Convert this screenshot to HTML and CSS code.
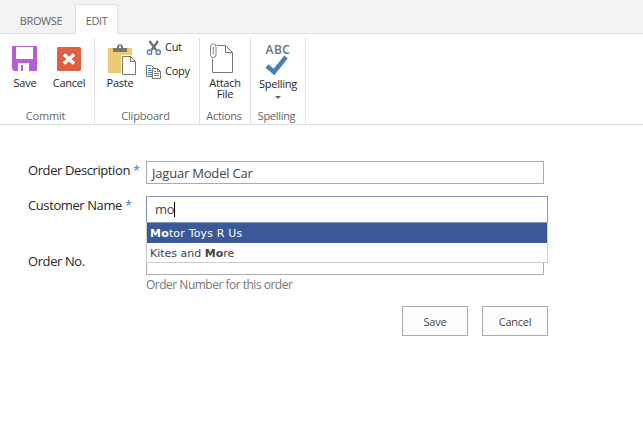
FILE: index.html
```
<!DOCTYPE html>
<html lang="en">
<head>
<meta charset="utf-8">
<title>Edit Order</title>
<link rel="stylesheet" href="styles.css">
</head>
<body>
<nav class="tabs">
  <div class="tab browse"><span>BROWSE</span></div>
  <div class="tab active"><span>EDIT</span></div>
</nav>
<section class="ribbon">
  <div class="group commit">
    <div class="tools">
      <div class="tool save">
        <svg class="icon" width="32" height="32" viewBox="0 0 32 32"><path fill="#b55fd0" fill-rule="evenodd" d="M4 4h25v25H6l-2-2zM8 5v12h17V5zM10 21v8h3v-6h2v6h6v-8z"/></svg>
        <span>Save</span>
      </div>
      <div class="tool cancel">
        <svg class="icon" width="32" height="32" viewBox="0 0 32 32"><rect x="4" y="5" width="24" height="24" rx="1.5" fill="#dd6142"/><path d="M11 12.500l10 9M21 12.500l-10 9" stroke="#fff" stroke-width="3.5"/></svg>
        <span>Cancel</span>
      </div>
    </div>
    <div class="caption">Commit</div>
  </div>
  <div class="group clipboard">
    <div class="tools">
      <div class="tool paste">
        <svg class="icon" width="32" height="32" viewBox="0 0 32 32"><rect x="4" y="6" width="24" height="25" rx="1" fill="#edcb75"/><path d="M9 10V6h4V4l1.500-1.500h3L19 4v2h4v4z" fill="#77786b"/><rect x="15" y="4" width="2" height="2" fill="#fff"/><path d="M17 13h10l5 5v15H17z" fill="#fff"/><path d="M18.500 14.500h8l5 5v13h-13z" fill="#fff" stroke="#77786b"/><path d="M26.500 14.500v5h5" fill="none" stroke="#77786b"/></svg>
        <span>Paste</span>
      </div>
      <div class="small-tools">
        <div class="small-tool">
          <svg width="16" height="16" viewBox="0 0 16 16"><path d="M3.500 1l6.500 9M12 1L5.500 10" stroke="#6b6b6b" stroke-width="2.200" fill="none"/><circle cx="3.500" cy="12.200" r="2.200" fill="#fff" stroke="#4a7ebb" stroke-width="1.300"/><circle cx="12.200" cy="12.200" r="2.200" fill="#fff" stroke="#4a7ebb" stroke-width="1.300"/></svg>
          <span>Cut</span>
        </div>
        <div class="small-tool">
          <svg width="16" height="16" viewBox="0 0 16 16"><path d="M.5 1.500h5l3 3v8h-8z" fill="#fff" stroke="#77786b"/><path d="M2 4.500h3M2 6.500h4M2 8.500h4M2 10.500h4" stroke="#4a7ebb"/><path d="M6.500 4.500h5l3 3v7h-8z" fill="#fff" stroke="#77786b"/><path d="M11.500 4.500v3h3" fill="none" stroke="#77786b"/><path d="M8 7.500h2M8 9.500h5M8 11.500h5" stroke="#4a7ebb"/></svg>
          <span>Copy</span>
        </div>
      </div>
    </div>
    <div class="caption">Clipboard</div>
  </div>
  <div class="group actions">
    <div class="tools">
      <div class="tool attach">
        <svg class="icon" width="32" height="32" viewBox="0 0 32 32"><path d="M5.500 17v13.500h20v-20l-7-7H10" fill="#fff" stroke="#77786b"/><path d="M18.500 3.500v7h7" fill="none" stroke="#77786b"/><path d="M3.500 5v7.500a2.500 3 0 0 0 5.500 0v-8a2.500 2.500 0 0 0-5.500 0v1M6.300 5v7.500" fill="none" stroke="#85857b"/></svg>
        <span>Attach<br>File</span>
      </div>
    </div>
    <div class="caption">Actions</div>
  </div>
  <div class="group spelling">
    <div class="tools">
      <div class="tool spell">
        <div class="icon abc"><b>ABC</b><svg width="24" height="20" viewBox="0 0 24 20"><path d="M2 10l7 6L21 1" fill="none" stroke="#4a80ba" stroke-width="4.500"/></svg></div>
        <span>Spelling</span>
        <i class="arrow"></i>
      </div>
    </div>
    <div class="caption">Spelling</div>
  </div>
</section>
<main class="form">
  <div class="row description">
    <label><span>Order Description</span> <em>*</em></label>
    <div class="field"><span>Jaguar Model Car</span></div>
  </div>
  <div class="row customer">
    <label><span>Customer Name</span> <em>*</em></label>
    <div class="lookup">
      <div class="query"><span>mo</span><i class="caret"></i></div>
      <div class="menu">
        <div class="option selected"><b>Mo</b>tor Toys R Us</div>
        <div class="option"><span>Kites and <b>Mo</b>re</span></div>
      </div>
    </div>
  </div>
  <div class="row number">
    <label><span>Order No.</span></label>
    <div><div class="field"></div><p class="hint">Order Number for this order</p></div>
  </div>
  <div class="buttons">
    <button><span>Save</span></button>
    <button><span>Cancel</span></button>
  </div>
</main>
</body>
</html>
```
FILE: styles.css
```
* { box-sizing: border-box; }
body { margin: 0; background: #fff; color: #262626; font-family: "Open Sans", "Noto Sans", sans-serif; font-size: 11px; }
svg { display: block; flex: none; overflow: visible; }
span { white-space: nowrap; }

.tabs { height: 34px; display: flex; align-items: flex-end; padding-left: 7px; background: #f3f3f3; border-bottom: 1px solid #e1e1e1; color: #666; }
.tab { height: 30px; line-height: 36px; text-align: center; letter-spacing: -.4px; }
.browse { width: 68px; }
.active { width: 43px; margin-bottom: -1px; background: #fff; border: 1px solid #e1e1e1; border-bottom: 0; line-height: 32px; }

.ribbon { display: flex; height: 91px; padding-top: 4px; border-bottom: 1px solid #e1e1e1; }
.group { display: flex; flex-direction: column; justify-content: space-between; height: 86px; border-right: 1px solid #e1e1e1; }
.commit { width: 95px; }
.clipboard { width: 105px; }
.actions { width: 51px; }
.spelling { width: 55px; }
.tools { display: flex; }
.tool { display: flex; flex-direction: column; align-items: center; line-height: 11px; text-align: center; color: #262626; letter-spacing: -.25px; padding-top: 4px; }
.tool .icon { margin-bottom: 3px; }
.tool.save { width: 42px; margin-left: 4px; }
.save .icon { margin-right: 2px; }
.tool.cancel { width: 46px; }
.tool.paste { width: 50px; }
.tool.attach { width: 51px; }
.tool.spell { width: 54px; }
.attach .icon { margin-right: 4px; }
.small-tools { padding: 2px 0 0 1px; }
.small-tool { display: flex; align-items: center; gap: 3px; height: 16px; margin-bottom: 8px; letter-spacing: -.3px; }
.small-tool span { line-height: 14px; margin-bottom: 2px; }
.abc { height: 32px; width: 32px; display: flex; flex-direction: column; align-items: center; }
.abc b { font-size: 12px; font-weight: 600; line-height: 12px; color: #707070; letter-spacing: .5px; margin-top: 2px; }
.abc svg { margin-right: 2px; }
.spell .icon { margin-bottom: 4px; }
.arrow { margin-top: 7px; border: 3px solid transparent; border-top-color: #666; border-bottom: 0; }
.caption { height: 16px; line-height: 15px; text-align: center; color: #666; letter-spacing: -.15px; }
.commit .caption { padding-right: 3px; }
.clipboard .caption { padding-right: 3px; }
.spelling .caption { padding-right: 3px; letter-spacing: -.3px; }
.actions .caption { padding-right: 2px; letter-spacing: -.3px; }

.form { padding: 36px 0 0 28px; }
.row { display: grid; grid-template-columns: 118px 402px; }
.row label { font-size: 13px; line-height: 18px; letter-spacing: -.4px; white-space: nowrap; }
.row em { color: #3d7fc9; font-style: normal; }
.description { height: 35px; }
.customer { height: 56px; }
.number { height: 54px; }
.field { width: 398px; height: 23px; border: 1px solid #ababab; padding-left: 5px; font-size: 13px; line-height: 22px; letter-spacing: -.2px; color: #444; }
.lookup { position: relative; height: 27px; }
.query { display: flex; align-items: center; height: 27px; border: 1px solid #8496ba; padding-left: 8px; font-size: 13px; letter-spacing: -.2px; color: #444; }
.query span { margin-bottom: 1px; }
.caret { width: 1px; height: 15px; background: #000; }
.menu { position: absolute; z-index: 1; top: 26px; left: 0; width: 402px; height: 41px; border: 1px solid #ccc; border-top-color: #8496ba; background: #fff; }
.option { height: 20px; padding-left: 3px; font: 11px/21px "DejaVu Sans", sans-serif; color: #444; white-space: nowrap; }
.selected { background: #3b5998; color: #fff; letter-spacing: .18px; }
.hint { margin: 1px 0 0; font-size: 12px; line-height: 18px; letter-spacing: -.5px; color: #777; }
.buttons { display: flex; justify-content: flex-end; gap: 14px; width: 520px; }
.buttons button { width: 66px; height: 30px; padding: 0; border: 1px solid #ababab; background: #fdfdfd; font: 11px "Open Sans", sans-serif; color: #444; letter-spacing: -.25px; }
```
